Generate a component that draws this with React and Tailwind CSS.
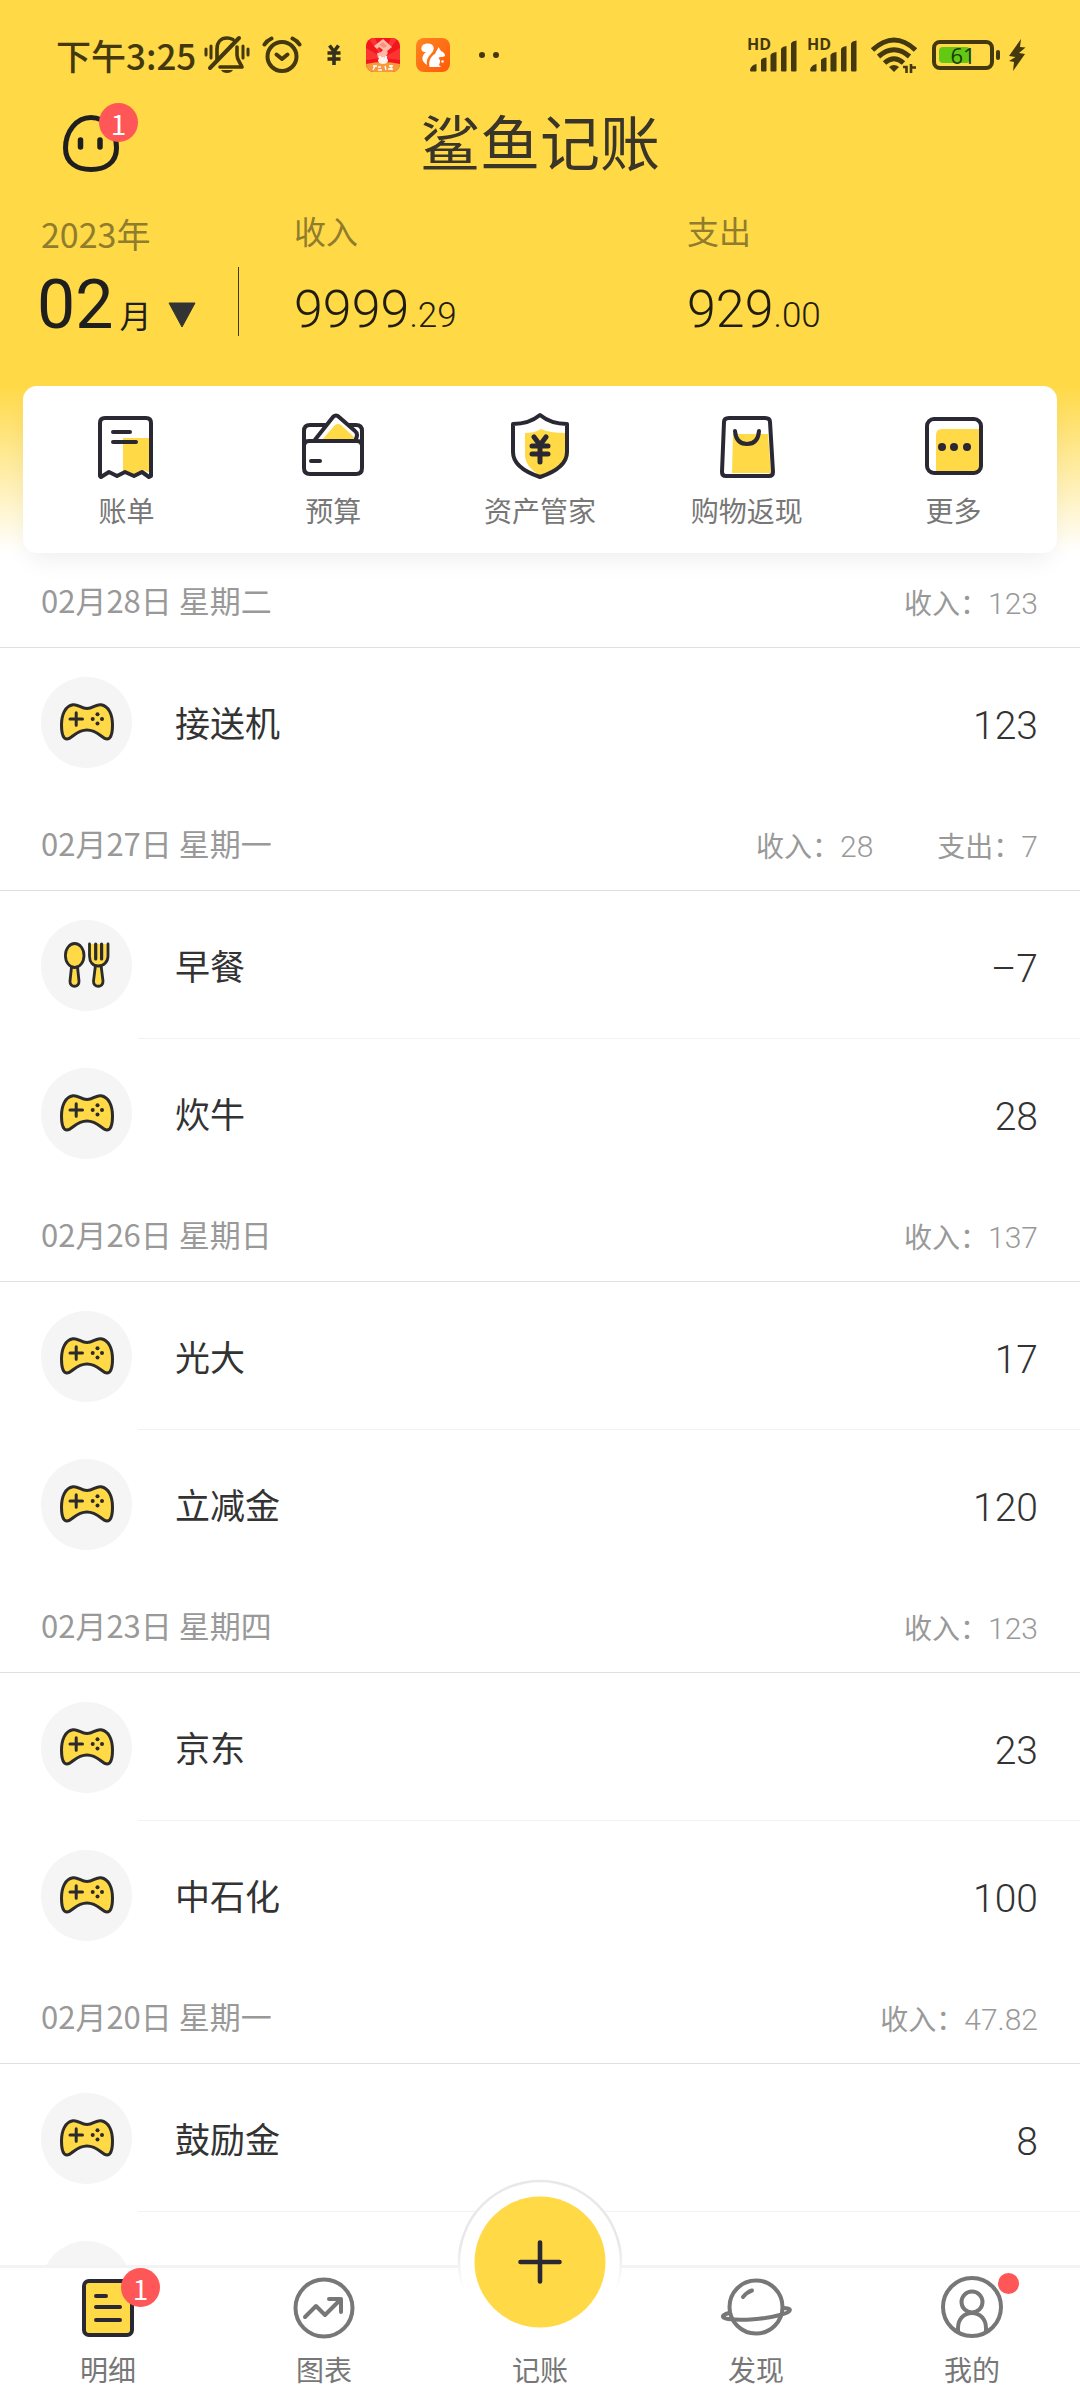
const INK = '#2a2833';
const YEL = '#ffd946';
const CJK = "font-['Noto_Sans_CJK_SC',sans-serif]";

const days = [
  { date: '02月28日 星期二', sums: [['收入', '123']], rows: [['接送机', '123', 'game']] },
  { date: '02月27日 星期一', sums: [['收入', '28'], ['支出', '7']], rows: [['早餐', '–7', 'meal'], ['炊牛', '28', 'game']] },
  { date: '02月26日 星期日', sums: [['收入', '137']], rows: [['光大', '17', 'game'], ['立减金', '120', 'game']] },
  { date: '02月23日 星期四', sums: [['收入', '123']], rows: [['京东', '23', 'game'], ['中石化', '100', 'game']] },
  { date: '02月20日 星期一', sums: [['收入', '47.82']], rows: [['鼓励金', '8', 'game'], ['', '', 'none']] },
];

function GameIcon() {
  return (
    <svg width="54" height="38" viewBox="0 0 54 38" aria-hidden="true">
      <path d="M13 1.8C18 1 21 5.500 27 5.500S36 1 41 1.800C49 3 52.500 12 52.500 22C52.500 29 51.500 36 47 36C42 36 38 27 27 27S12 36 7 36C2.500 36 1.500 29 1.500 22C1.500 12 5 3 13 1.800Z" fill={YEL} stroke="#2b2a2c" strokeWidth="3" strokeLinejoin="round" />
      <path d="M10 16H22.500M16.200 9.800V22.200" stroke="#2b2a2c" strokeWidth="3" strokeLinecap="round" />
      <g fill="#2b2a2c">
        <circle cx="37.500" cy="11.300" r="2" />
        <circle cx="37.500" cy="20.500" r="2" />
        <circle cx="32.700" cy="16" r="2" />
        <circle cx="42" cy="16" r="2" />
      </g>
    </svg>
  );
}

function MealIcon() {
  return (
    <svg width="48" height="46" viewBox="0 0 48 46" aria-hidden="true" fill={YEL} stroke="#2b2a2c" strokeWidth="2.800" strokeLinejoin="round" strokeLinecap="round">
      <path d="M8.500 25L7 39C6.500 46 16.500 46 16 39L14.500 25Z" />
      <ellipse cx="11.700" cy="13.500" rx="9.300" ry="12" />
      <path d="M32.500 23L30.500 39C30 46 40.500 46 40 39L38 23Z" />
      <path d="M26.500 2V14C26.500 20 30 24 35.300 24S45 20 45 14V2" />
      <path d="M32.700 2V17M38.600 2V17" fill="none" strokeWidth="3.200" />
    </svg>
  );
}

function BellOff() {
  return (
    <svg width="46" height="40" viewBox="0 0 46 40" fill="none" stroke="#43380e" strokeWidth="3.600" aria-hidden="true">
      <path d="M13 25V14C13 7 17 3 23 3C25 3 27 3.500 29 4.500M33 12V20C33 25 36 27 38 32H16" strokeLinejoin="round" strokeLinecap="round" />
      <path d="M6 33L35 3" strokeLinecap="round" strokeWidth="4" />
      <path d="M2 14V20M7 11V23M39 11V23M44 14V20" strokeWidth="3" strokeLinecap="round" />
      <path d="M17 35H29C27 39 19 39 17 35Z" fill="#43380e" stroke="none" />
    </svg>
  );
}

function Alarm() {
  return (
    <svg width="40" height="38" viewBox="0 0 40 38" fill="none" stroke="#43380e" strokeWidth="4" aria-hidden="true">
      <circle cx="20" cy="20.500" r="14.500" />
      <path d="M14.500 18.500L20 23L25.500 18.500" strokeLinecap="round" strokeLinejoin="round" />
      <path d="M2.500 8.500Q5 4.500 9.500 2.500M37.500 8.500Q35 4.500 30.500 2.500" strokeLinecap="round" />
    </svg>
  );
}

function AppRed() {
  return (
    <svg width="34" height="34" viewBox="0 0 34 34" aria-hidden="true">
      <defs><clipPath id="redclip"><rect width="34" height="34" rx="8" /></clipPath></defs>
      <g clipPath="url(#redclip)">
        <rect width="34" height="34" fill="#f4151f" />
        <path d="M17 20L0 10V22ZM17 20L34 10V22ZM17 20L2 0H9ZM17 20L32 0H25Z" fill="#fb3532" />
        <path d="M0 26Q17 22 34 26V34H0Z" fill="#f79a3c" />
        <path d="M8 8L17 1L26 9L21 13C23 16 20 19 16 20H12L11 15Q15 15 17 12L13 9L11 11Z" fill="#ffb9a6" />
        <path d="M13 7L17 4L21 8L18 10Z" fill="#f98f80" />
        <ellipse cx="17" cy="22.500" rx="5" ry="3.500" fill="#fff3ec" />
        <path d="M14 18V21M20 18V21" stroke="#fff3ec" strokeWidth="2" />
        <path d="M7 28H11M9 28L7 32M12 29H15M12 32H16M19 28L20 32M23 28H27M25 27V32M22 31H27" stroke="#fff" strokeWidth="1.300" />
      </g>
    </svg>
  );
}

function AppOrange() {
  return (
    <svg width="34" height="34" viewBox="0 0 34 34" aria-hidden="true">
      <defs><linearGradient id="og" x1="0" y1="0" x2="1" y2="1"><stop offset="0" stopColor="#ff8420" /><stop offset="1" stopColor="#ff5a0a" /></linearGradient></defs>
      <rect width="34" height="34" rx="8" fill="url(#og)" />
      <path d="M11 27C5 23 5 18 10 14C4 15 4 7 9 6C16 4 20 9 16.500 14C13 18 10 21 11 27Z" fill="#fff" />
      <path d="M13.500 29C12.500 22 15 18 19 16C20 13 21.500 12 22.500 9L25 13C28 14 29 16 29 18C26 20 24 18 22.500 20C24.500 22 24.500 24 23 27L25 29Z" fill="#fff" />
      <circle cx="26.500" cy="23.500" r="1.300" fill="#fff" />
    </svg>
  );
}

function Signal() {
  return (
    <span className="relative block h-[34px] w-[52px]">
      <span className="absolute left-0 -top-0.5 font-['Open_Sans',sans-serif] text-base leading-4 font-bold">HD</span>
      <svg className="absolute bottom-0 left-0.5" width="50" height="32" viewBox="0 0 50 32" fill="#43380e" aria-hidden="true">
        <path d="M1 30Q2 25 7.500 24V30.500Q7.500 31.500 6.500 31.500H2Q1 31.500 1 30ZM12 20Q13 18 17.500 17.500V30.500Q17.500 31.500 16.500 31.500H13Q12 31.500 12 30.500ZM21.500 15Q22.500 12.500 27.500 12V30.500Q27.500 31.500 26.500 31.500H22.500Q21.500 31.500 21.500 30.500ZM32 9Q33 6.500 37.500 6V30.500Q37.500 31.500 36.500 31.500H33Q32 31.500 32 30.500ZM42 3.500Q43 1 47.500 .500V30.500Q47.500 31.500 46.500 31.500H43Q42 31.500 42 30.500Z" />
      </svg>
    </span>
  );
}

function StatusBar() {
  return (
    <div className="flex h-[110px] items-center pl-14 pr-[54px] text-[#43380e]">
      <span className="text-[35px] leading-10 font-medium whitespace-nowrap">下午3:25</span>
      <span className="ml-2"><BellOff /></span>
      <span className="ml-3"><Alarm /></span>
      <svg className="ml-6" width="16" height="22" viewBox="0 0 16 22" fill="none" stroke="#33301c" strokeWidth="3.600" aria-hidden="true">
        <path d="M3.500 1.500L8 7.500L12.500 1.500M1.500 9H14.500M1.500 15H14.500M8 8V21" />
      </svg>
      <span className="ml-6"><AppRed /></span>
      <span className="ml-4"><AppOrange /></span>
      <span className="ml-[29px] flex gap-2">
        <i className="size-1.5 rounded-full bg-[#43380e]" />
        <i className="size-1.5 rounded-full bg-[#43380e]" />
      </span>
      <span className="ml-auto flex items-center">
        <span className="flex gap-2"><Signal /><Signal /></span>
        <svg className="ml-3" width="46" height="36" viewBox="0 0 46 36" fill="none" stroke="#43380e" strokeWidth="5" aria-hidden="true">
          <path d="M1.500 13Q23 -7 44.500 13" />
          <path d="M7.500 19.500Q23 6 38.500 19.500" />
          <path d="M13.500 26Q23 17.500 32.500 26" />
          <path d="M18 30Q23 26 28 30L23 35Z" fill="#43380e" stroke="none" />
          <path d="M32 30H35.500V36M40 36V27M40 30.500H45" strokeWidth="2.600" />
        </svg>
        <span className="relative ml-[15px] flex h-[30px] w-[62px] rounded-lg border-4 border-[#43380e] p-[3px]">
          <span className="h-full w-[31px] rounded-sm bg-[#62c813]" />
          <span className="absolute inset-0 text-center font-['Open_Sans',sans-serif] text-[22px] leading-[22px] font-medium text-[#1c3a0b]">61</span>
        </span>
        <i className="ml-0.5 h-2.5 w-1 rounded-sm bg-[#43380e]" />
        <svg className="ml-2" width="18" height="32" viewBox="0 0 18 32" fill="#43380e" aria-hidden="true">
          <path d="M13 0L1 17L7.500 18L1 22L6 23L5 32L17 15L11 14L17.500 8.500L12 8Z" />
        </svg>
      </span>
    </div>
  );
}

function Badge({ className }) {
  return <span className={'absolute flex size-[39px] items-center justify-center rounded-full bg-[#ff5757] text-[28px] leading-none text-white ' + className}>1</span>;
}

function Stat({ label, whole, frac, className }) {
  return (
    <div className={className}>
      <div className="text-[32px] leading-10 text-[#8f7c2e]">{label}</div>
      <div className="mt-[34px] font-['Roboto',sans-serif] text-[52px] leading-[52px] font-light text-[#1f1d12]">
        {whole}<span className="text-[35px]">{frac}</span>
      </div>
    </div>
  );
}

const stroke = { fill: 'none', stroke: INK, strokeWidth: 4, strokeLinecap: 'round', strokeLinejoin: 'round' };
const quick = [
  ['账单', (
    <>
      <path d="M30 26H58V61L50 58L41 63L34 59H30Z" fill={YEL} />
      <path d="M7 64V11Q7 6 12 6H53Q58 6 58 11V64L56 65L49 60L41 64L32 60L24 64L16 60L8 65Z" {...stroke} />
      <path d="M20 20H37M20 30H43" {...stroke} />
    </>
  )],
  ['预算', (
    <>
      <path d="M22 28L35 13Q38 11 41 13L54 25L53 28Z" fill={YEL} />
      <path d="M25 13H10Q4 13 4 19V56Q4 62 10 62H56Q62 62 62 56V19Q62 13 56 13H49" {...stroke} />
      <path d="M4 33Q5 29 9 29H57Q61 29 62 33M14 29L33 5Q36 2 39 5L55 19Q59 22 55 29M11 49H20" {...stroke} />
    </>
  )],
  ['资产管家', (
    <>
      <path d="M18 21Q28 21 34 17Q42 21 59 21V42Q59 56 33 64Q18 54 18 44Z" fill={YEL} />
      <path d="M33 3Q22 12 6 12V40Q6 56 33 65Q60 56 60 40V12Q44 12 33 3Z" {...stroke} />
      <path d="M27 25L33 33L39 25M25 34H41M25 42H41M33 33V50" {...stroke} strokeWidth={5} />
    </>
  )],
  ['购物返现', (
    <>
      <path d="M19 22H54L57 61H18Z" fill={YEL} />
      <path d="M15 6H51Q56 6 56 10L59 60Q59 64 55 64H12Q8 64 8 60L10 10Q10 6 15 6Z" {...stroke} />
      <path d="M21 19Q22 32 33 32T45 19" {...stroke} />
    </>
  )],
  ['更多', (
    <>
      <path d="M15 23Q15 17 21 17H59V61H15Z" fill={YEL} />
      <rect x="6" y="7" width="54" height="54" rx="7" {...stroke} />
      <g fill={INK}><circle cx="21" cy="35" r="4" /><circle cx="33" cy="35" r="4" /><circle cx="46" cy="35" r="4" /></g>
    </>
  )],
];

function Row({ name, amount, kind, last }) {
  return (
    <li className="relative flex h-[148px] items-center pl-[41px] pr-[42px]">
      <span className="flex size-[91px] shrink-0 items-center justify-center rounded-full bg-[#f5f5f5]">
        {kind === 'meal' ? <MealIcon /> : kind === 'game' ? <GameIcon /> : null}
      </span>
      <span className="ml-[43px] text-[35px] leading-[48px] text-[#333]">{name}</span>
      <span className="ml-auto pt-2 font-['Roboto',sans-serif] text-[39px] leading-[48px] font-light text-[#333]">{amount}</span>
      {!last && <i className="absolute bottom-0 left-[138px] right-0 h-px bg-[#f2f2f2]" />}
    </li>
  );
}

const tabStroke = { fill: 'none', stroke: '#777', strokeWidth: 4, strokeLinecap: 'round', strokeLinejoin: 'round' };

function Tab({ label, children }) {
  return (
    <button type="button" className="flex flex-1 flex-col items-center">
      <span className="relative block h-[72px] w-[72px]">{children}</span>
      <span className="mt-1.5 text-[28px] leading-10 text-[#777]">{label}</span>
    </button>
  );
}

export default function App() {
  return (
    <div className={'flex h-screen flex-col overflow-hidden bg-white ' + CJK}>
      <header className="bg-[linear-gradient(#ffd946_0,#ffd946_386px,#fff_552px)]">
        <StatusBar />
        <div className="relative flex h-[76px] items-center justify-center pb-4">
          <button type="button" aria-label="消息" className="absolute left-[62px] top-0 h-16 w-20">
            <svg className="absolute left-0 top-1" width="60" height="60" viewBox="0 0 60 60" fill="none" stroke="#1f1f1f" strokeWidth="5" strokeLinecap="round" aria-hidden="true">
              <path d="M29 3.500C44 3.500 54.500 18 54.500 34C54.500 49 43 55.500 29 55.500S3.500 49 3.500 34C3.500 18 14 3.500 29 3.500Z" />
              <path d="M18.500 26V33M38 26V33" strokeWidth="5.500" />
            </svg>
            <Badge className="left-[37px] -top-[7px]" />
          </button>
          <h1 className="text-[60px] leading-[60px] text-[#3a3529]">鲨鱼记账</h1>
        </div>
        <div className="flex h-[200px] pl-[37px] pt-6">
          <button type="button" className="w-[201px] self-start pt-1 text-left">
            <span className="ml-1 block text-[34px] leading-10 text-[#8f7c2e]">2023年</span>
            <span className="mt-[17px] flex items-baseline text-[#1f1f1f]">
              <span className="font-['Roboto',sans-serif] text-[68px] leading-[68px]">02</span>
              <span className="ml-1.5 text-[32px] leading-10">月</span>
              <svg className="ml-4" width="30" height="26" viewBox="0 0 30 26" aria-hidden="true"><path d="M2 1H28L15 25Z" fill="#333" stroke="#333" strokeLinejoin="round" /></svg>
            </span>
          </button>
          <i className="mt-[57px] h-[69px] w-px bg-[#43380e]" />
          <Stat className="ml-[55px] w-[393px]" label="收入" whole="9999" frac=".29" />
          <Stat label="支出" whole="929" frac=".00" />
        </div>
        <nav className="mx-[23px] flex h-[167px] rounded-[14px] bg-white shadow-[0_12px_24px_-6px_rgba(0,0,0,0.07)]">
          {quick.map(([label, art]) => (
            <button type="button" key={label} className="flex flex-1 flex-col items-center pb-0.5">
              <svg className="mt-[26px] shrink-0" width="66" height="68" viewBox="0 0 66 68" aria-hidden="true">{art}</svg>
              <span className="mt-2.5 text-[28px] leading-10 text-[#777]">{label}</span>
            </button>
          ))}
        </nav>
      </header>

      <main className="min-h-0 flex-1 overflow-hidden">
        {days.map((d) => (
          <section key={d.date}>
            <div className="flex h-[95px] items-center border-b border-[#e0e0e0] pl-[41px] pr-[42px] text-[#999]">
              <h2 className="text-[31px] leading-10">{d.date}</h2>
              <div className="ml-auto flex gap-16 pt-1.5 text-[28px] leading-10">
                {d.sums.map(([k, v]) => (
                  <span key={k}>{k}：<span className="font-['Roboto',sans-serif] text-[30px] font-light">{v}</span></span>
                ))}
              </div>
            </div>
            <ul>
              {d.rows.map(([n, a, k], i) => (
                <Row key={i} name={n} amount={a} kind={k} last={i === d.rows.length - 1} />
              ))}
            </ul>
          </section>
        ))}
      </main>

      <footer className="relative flex h-[135px] shrink-0 border-t-[3px] border-[#f3f3f3] bg-white pt-[3px]">
        <Tab label="明细">
          <svg width="72" height="72" viewBox="0 0 72 72" aria-hidden="true">
            <rect x="12" y="10" width="48" height="54" rx="5" fill={YEL} stroke={INK} strokeWidth="4" />
            <path d="M24 25H34M24 36H48M24 49H48" {...stroke} />
          </svg>
          <Badge className="left-[49px] -top-[3px]" />
        </Tab>
        <Tab label="图表">
          <svg width="72" height="72" viewBox="0 0 72 72" aria-hidden="true">
            <circle cx="36" cy="37" r="28.500" {...tabStroke} />
            <path d="M17 46L28 35L37 44L53 28M41 28H53V41" {...tabStroke} />
          </svg>
        </Tab>
        <Tab label="记账">
          <svg className="absolute -left-12 -top-[93px]" width="168" height="168" viewBox="0 0 168 168" aria-hidden="true">
            <defs>
              <linearGradient id="ring" x1="0" y1="0" x2="0" y2="1"><stop offset="0.4" stopColor="#e8e8e8" /><stop offset="0.67" stopColor="#fff" /></linearGradient>
            </defs>
            <circle cx="84" cy="84" r="81" fill="#fff" stroke="url(#ring)" strokeWidth="2.500" />
            <circle cx="84" cy="84" r="65.500" fill={YEL} />
            <path d="M84 64.500V103.500M64.500 84H103.500" {...stroke} strokeWidth={4.600} />
          </svg>
        </Tab>
        <Tab label="发现">
          <svg width="72" height="72" viewBox="0 0 72 72" aria-hidden="true">
            <circle cx="36" cy="36" r="26.500" {...tabStroke} />
            <path d="M23 26Q27 21 32 19.500" {...tabStroke} />
            <path d="M9 42C1 44 1 47 8 48C22 50 45 48 60 44C72 41 73 37 63 37" {...tabStroke} />
          </svg>
        </Tab>
        <Tab label="我的">
          <svg width="72" height="72" viewBox="0 0 72 72" aria-hidden="true">
            <circle cx="36" cy="36" r="29" {...tabStroke} />
            <circle cx="36" cy="31" r="10.500" {...tabStroke} />
            <path d="M22 60V57C22 48 28 42 36 42S50 48 50 57V60" {...tabStroke} />
          </svg>
          <i className="absolute left-[62px] top-0.5 size-[21px] rounded-full bg-[#ff5757]" />
        </Tab>
      </footer>
    </div>
  );
}
